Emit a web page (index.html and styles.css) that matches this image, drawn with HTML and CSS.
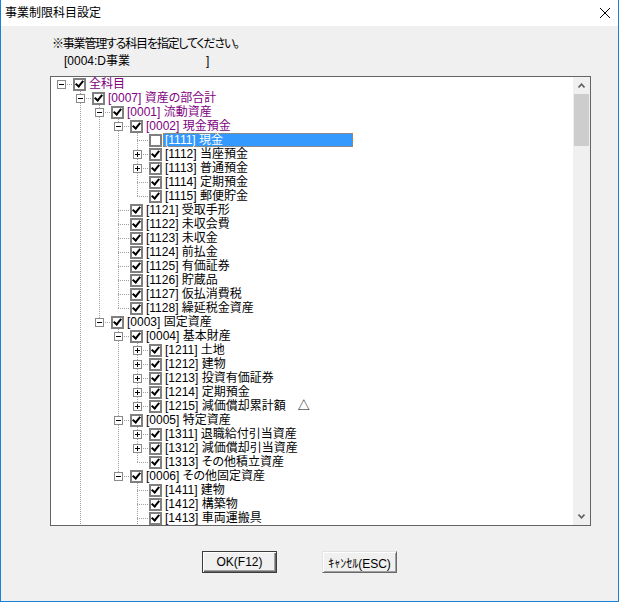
FILE: index.html
```html
<!DOCTYPE html>
<html>

<head>
    <title>事業制限科目設定</title>
    <meta charset="utf-8">
    <meta name="viewport" content="width=device-width, initial-scale=1">
    <link rel="stylesheet" href="styles.css">
</head>

<body>
    <div class="window">
        <div class="titlebar">
            <span class="title">事業制限科目設定</span>
            <svg class="close" width="10" height="10" viewBox="0 0 10 10">
                <path d="M0 0L10 10M10 0L0 10" stroke="#000" stroke-width="1" fill="none"/>
            </svg>
        </div>

        <div class="content">
            <p class="note">※事業管理する科目を指定してください。</p>
            <p class="target"><span class="target-name">[0004:D事業</span><span>]</span></p>

            <div class="tree-box">
                <div class="tree">
                    <div class="row"><span class="conn"><span class="exp minus"></span></span><span class="check on"></span><span class="label purple">全科目</span></div>
                    <div class="row"><span class="guide"></span><span class="conn mid"><span class="exp minus"></span></span><span class="check on"></span><span class="label purple">[0007] 資産の部合計</span></div>
                    <div class="row"><span class="guide"></span><span class="guide line"></span><span class="conn mid"><span class="exp minus"></span></span><span class="check on"></span><span class="label purple">[0001] 流動資産</span></div>
                    <div class="row"><span class="guide"></span><span class="guide line"></span><span class="guide line"></span><span class="conn mid"><span class="exp minus"></span></span><span class="check on"></span><span class="label purple">[0002] 現金預金</span></div>
                    <div class="row"><span class="guide"></span><span class="guide line"></span><span class="guide line"></span><span class="guide line"></span><span class="conn mid"></span><span class="check"></span><span class="label selected">[1111] 現金</span></div>
                    <div class="row"><span class="guide"></span><span class="guide line"></span><span class="guide line"></span><span class="guide line"></span><span class="conn mid"><span class="exp plus"></span></span><span class="check on"></span><span class="label">[1112] 当座預金</span></div>
                    <div class="row"><span class="guide"></span><span class="guide line"></span><span class="guide line"></span><span class="guide line"></span><span class="conn mid"><span class="exp plus"></span></span><span class="check on"></span><span class="label">[1113] 普通預金</span></div>
                    <div class="row"><span class="guide"></span><span class="guide line"></span><span class="guide line"></span><span class="guide line"></span><span class="conn mid"></span><span class="check on"></span><span class="label">[1114] 定期預金</span></div>
                    <div class="row"><span class="guide"></span><span class="guide line"></span><span class="guide line"></span><span class="guide line"></span><span class="conn end"></span><span class="check on"></span><span class="label">[1115] 郵便貯金</span></div>
                    <div class="row"><span class="guide"></span><span class="guide line"></span><span class="guide line"></span><span class="conn mid"></span><span class="check on"></span><span class="label">[1121] 受取手形</span></div>
                    <div class="row"><span class="guide"></span><span class="guide line"></span><span class="guide line"></span><span class="conn mid"></span><span class="check on"></span><span class="label">[1122] 未収会費</span></div>
                    <div class="row"><span class="guide"></span><span class="guide line"></span><span class="guide line"></span><span class="conn mid"></span><span class="check on"></span><span class="label">[1123] 未収金</span></div>
                    <div class="row"><span class="guide"></span><span class="guide line"></span><span class="guide line"></span><span class="conn mid"></span><span class="check on"></span><span class="label">[1124] 前払金</span></div>
                    <div class="row"><span class="guide"></span><span class="guide line"></span><span class="guide line"></span><span class="conn mid"></span><span class="check on"></span><span class="label">[1125] 有価証券</span></div>
                    <div class="row"><span class="guide"></span><span class="guide line"></span><span class="guide line"></span><span class="conn mid"></span><span class="check on"></span><span class="label">[1126] 貯蔵品</span></div>
                    <div class="row"><span class="guide"></span><span class="guide line"></span><span class="guide line"></span><span class="conn mid"></span><span class="check on"></span><span class="label">[1127] 仮払消費税</span></div>
                    <div class="row"><span class="guide"></span><span class="guide line"></span><span class="guide line"></span><span class="conn end"></span><span class="check on"></span><span class="label">[1128] 繰延税金資産</span></div>
                    <div class="row"><span class="guide"></span><span class="guide line"></span><span class="conn end"><span class="exp minus"></span></span><span class="check on"></span><span class="label">[0003] 固定資産</span></div>
                    <div class="row"><span class="guide"></span><span class="guide line"></span><span class="guide"></span><span class="conn mid"><span class="exp minus"></span></span><span class="check on"></span><span class="label">[0004] 基本財産</span></div>
                    <div class="row"><span class="guide"></span><span class="guide line"></span><span class="guide"></span><span class="guide line"></span><span class="conn mid"><span class="exp plus"></span></span><span class="check on"></span><span class="label">[1211] 土地</span></div>
                    <div class="row"><span class="guide"></span><span class="guide line"></span><span class="guide"></span><span class="guide line"></span><span class="conn mid"><span class="exp plus"></span></span><span class="check on"></span><span class="label">[1212] 建物</span></div>
                    <div class="row"><span class="guide"></span><span class="guide line"></span><span class="guide"></span><span class="guide line"></span><span class="conn mid"><span class="exp plus"></span></span><span class="check on"></span><span class="label">[1213] 投資有価証券</span></div>
                    <div class="row"><span class="guide"></span><span class="guide line"></span><span class="guide"></span><span class="guide line"></span><span class="conn mid"><span class="exp plus"></span></span><span class="check on"></span><span class="label">[1214] 定期預金</span></div>
                    <div class="row"><span class="guide"></span><span class="guide line"></span><span class="guide"></span><span class="guide line"></span><span class="conn end"><span class="exp plus"></span></span><span class="check on"></span><span class="label">[1215] 減価償却累計額　△</span></div>
                    <div class="row"><span class="guide"></span><span class="guide line"></span><span class="guide"></span><span class="conn mid"><span class="exp minus"></span></span><span class="check on"></span><span class="label">[0005] 特定資産</span></div>
                    <div class="row"><span class="guide"></span><span class="guide line"></span><span class="guide"></span><span class="guide line"></span><span class="conn mid"><span class="exp plus"></span></span><span class="check on"></span><span class="label">[1311] 退職給付引当資産</span></div>
                    <div class="row"><span class="guide"></span><span class="guide line"></span><span class="guide"></span><span class="guide line"></span><span class="conn mid"><span class="exp plus"></span></span><span class="check on"></span><span class="label">[1312] 減価償却引当資産</span></div>
                    <div class="row"><span class="guide"></span><span class="guide line"></span><span class="guide"></span><span class="guide line"></span><span class="conn end"></span><span class="check on"></span><span class="label">[1313] その他積立資産</span></div>
                    <div class="row"><span class="guide"></span><span class="guide line"></span><span class="guide"></span><span class="conn end"><span class="exp minus"></span></span><span class="check on"></span><span class="label">[0006] その他固定資産</span></div>
                    <div class="row"><span class="guide"></span><span class="guide line"></span><span class="guide"></span><span class="guide"></span><span class="conn mid"></span><span class="check on"></span><span class="label">[1411] 建物</span></div>
                    <div class="row"><span class="guide"></span><span class="guide line"></span><span class="guide"></span><span class="guide"></span><span class="conn mid"></span><span class="check on"></span><span class="label">[1412] 構築物</span></div>
                    <div class="row"><span class="guide"></span><span class="guide line"></span><span class="guide"></span><span class="guide"></span><span class="conn mid"></span><span class="check on"></span><span class="label">[1413] 車両運搬具</span></div>
                </div>
                <div class="vscroll">
                    <span class="sb-btn">
                        <svg width="7" height="5" viewBox="0 0 7 5"><path d="M0.5 4.5L3.5 1.2L6.5 4.5" stroke="#606060" stroke-width="1.6" fill="none"/></svg>
                    </span>
                    <span class="thumb"></span>
                    <span class="sb-track"></span>
                    <span class="sb-btn">
                        <svg width="7" height="5" viewBox="0 0 7 5"><path d="M0.5 0.5L3.5 3.8L6.5 0.5" stroke="#606060" stroke-width="1.6" fill="none"/></svg>
                    </span>
                </div>
            </div>

            <div class="buttons">
                <button class="btn btn-default">OK(F12)</button>
                <button class="btn">ｷｬﾝｾﾙ(ESC)</button>
            </div>
        </div>
    </div>
</body>

</html>
```

FILE: styles.css
```css
body,
html {
    margin: 0;
    padding: 0;
    font-family: "Liberation Sans", "Noto Sans CJK JP", sans-serif;
    font-size: 12px;
    font-feature-settings: "palt";
    color: #000000;
}

.window {
    width: 619px;
    height: 602px;
    box-sizing: border-box;
    border: 1px solid #1a82d6;
    border-top: none;
    background-color: #f0f0f0;
    display: flex;
    flex-direction: column;
}

.titlebar {
    height: 26px;
    flex: none;
    background-color: #ffffff;
    display: flex;
    align-items: center;
    justify-content: space-between;
    padding: 0 8px 0 4px;
}

.title {
    line-height: 14px;
}

.close {
    display: block;
}

.content {
    padding-left: 49px;
}

.note,
.target {
    margin: 0;
    line-height: 14px;
    padding-left: 2px;
}

.note {
    margin-top: 11px;
    letter-spacing: -1.2px;
}

.target {
    margin-top: 3px;
    padding-left: 14px;
    display: flex;
}

.target-name {
    min-width: 142px;
}

.tree-box {
    margin-top: 8px;
    width: 541px;
    height: 450px;
    box-sizing: border-box;
    border: 1px solid #646464;
    background-color: #ffffff;
    display: flex;
    overflow: hidden;
}

.tree {
    --h: repeating-linear-gradient(to right, #a0a0a0 0 1px, transparent 1px 2px);
    --v: repeating-linear-gradient(to bottom, #a0a0a0 0 1px, transparent 1px 2px);
    flex: 1;
    display: flex;
    flex-direction: column;
    padding-left: 1px;
}

.row {
    height: 14px;
    flex: none;
    display: flex;
    align-items: center;
}

.guide {
    width: 19px;
    height: 14px;
    flex: none;
}

.guide.line {
    background: var(--v) 9px 0 / 1px 14px no-repeat;
}

.conn {
    width: 21px;
    height: 14px;
    flex: none;
    display: flex;
    align-items: center;
    background: var(--h) 9px 7px / 12px 1px no-repeat;
}

.conn.mid {
    background: var(--h) 9px 7px / 12px 1px no-repeat,
        var(--v) 9px 0 / 1px 14px no-repeat;
}

.conn.end {
    background: var(--h) 9px 7px / 12px 1px no-repeat,
        var(--v) 9px 0 / 1px 8px no-repeat;
}

.exp {
    width: 9px;
    height: 9px;
    box-sizing: border-box;
    margin-left: 5px;
    border: 1px solid #8a8a8a;
    background-color: #ffffff;
}

.exp.minus {
    background: linear-gradient(#000, #000) center / 5px 1px no-repeat, #ffffff;
}

.exp.plus {
    background: linear-gradient(#000, #000) center / 5px 1px no-repeat,
        linear-gradient(#000, #000) center / 1px 5px no-repeat, #ffffff;
}

.check {
    width: 13px;
    height: 13px;
    flex: none;
    box-sizing: border-box;
    border: 2px solid #808080;
    background-color: #ffffff;
    display: flex;
    align-items: center;
    justify-content: center;
    margin-right: 1px;
}

.check.on::after {
    content: "";
    width: 3px;
    height: 6px;
    margin-top: -2px;
    border: solid #000000;
    border-width: 0 2px 2px 0;
    transform: rotate(40deg);
}

.label {
    line-height: 14px;
    padding: 0 2px;
    white-space: nowrap;
}

.label.purple {
    color: #800080;
}

.label.selected {
    width: 190px;
    height: 14px;
    box-sizing: border-box;
    color: #ffffff;
    background-color: #3399ff;
    outline: 1px dotted #d67f1c;
    outline-offset: -1px;
}

.vscroll {
    width: 17px;
    flex: none;
    background-color: #f0f0f0;
    display: flex;
    flex-direction: column;
}

.sb-btn {
    height: 17px;
    flex: none;
    display: flex;
    align-items: center;
    justify-content: center;
}

.thumb {
    height: 52px;
    flex: none;
    margin: 0 1px;
    background-color: #cdcdcd;
}

.sb-track {
    flex: 1;
}

.buttons {
    margin-top: 25px;
    padding-left: 152px;
    display: flex;
    gap: 45px;
}

.btn {
    width: 75px;
    height: 22px;
    padding: 0;
    font-family: inherit;
    font-size: 12px;
    font-feature-settings: normal;
    color: #000000;
    background-color: #f0f0f0;
    border: 1px solid;
    border-color: #e3e3e3 #696969 #696969 #e3e3e3;
    box-shadow: inset 1px 1px #ffffff, inset -1px -1px #a0a0a0;
}

.btn-default {
    border-color: #3c3c3c;
    box-shadow: inset 1px 1px #ffffff, inset -1px -1px #696969, inset -2px -2px #a0a0a0;
}
```
